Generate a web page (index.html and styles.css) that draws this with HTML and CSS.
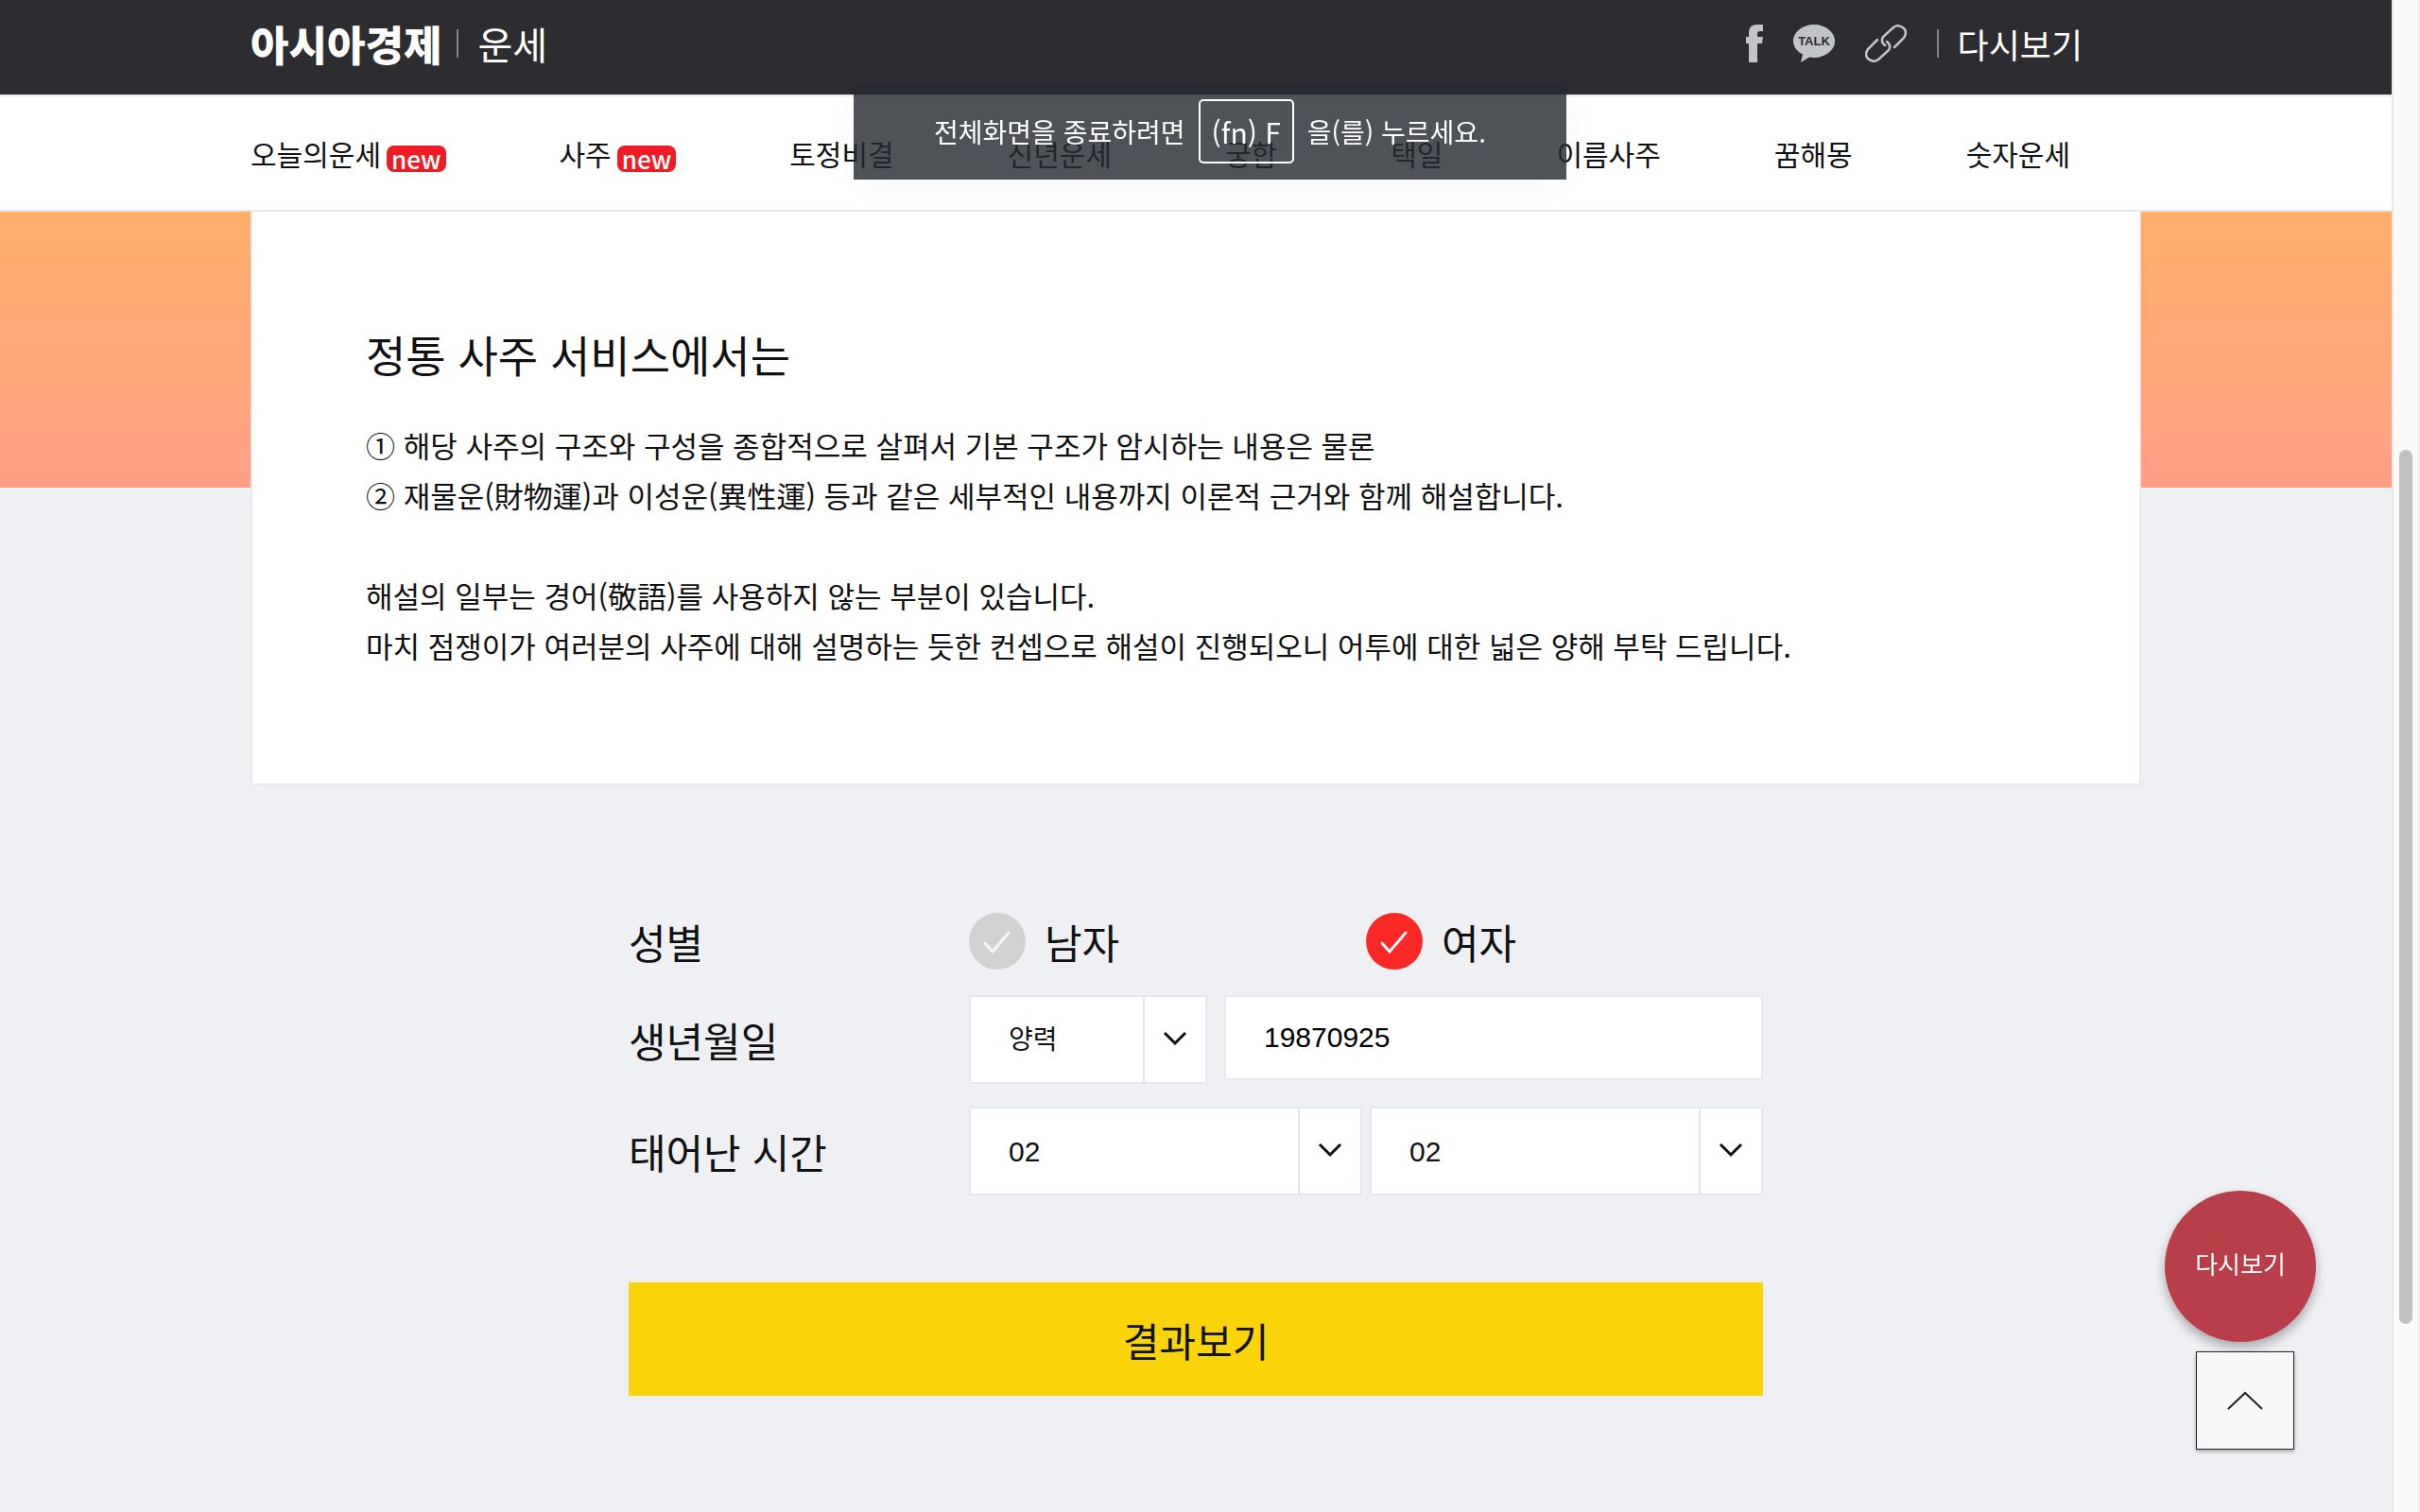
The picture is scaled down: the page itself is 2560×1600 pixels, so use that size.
FILE: index.html
```html
<!DOCTYPE html>
<html lang="ko">
<head>
  <meta charset="UTF-8">
  <title>아시아경제 운세</title>
  <meta name="viewport" content="width=device-width, initial-scale=1.0">
  <link rel="stylesheet" href="styles.css">
</head>
<body>

  <div class="page">
    <header class="top">
      <div class="inner top-inner">
        <a href="#" class="logo">아시아경제</a>
        <span class="bar"></span>
        <a href="#" class="section-name">운세</a>

        <div class="share">
          <a href="#" aria-label="facebook">
            <svg width="18" height="40" viewBox="0 0 18 40" fill="#c1c4c9"><path d="M3 40V20H0v-7h3V9c0-6 3-9 9-9h6v7h-3c-2 0-3 1-3 3v3h6l-1 7h-5v20z"/></svg>
          </a>
          <a href="#" aria-label="kakaotalk">
            <svg width="44" height="40" viewBox="0 0 44 40">
              <path d="M22 0C10 0 0 8 0 17.500c0 6 4 11 10 14L8 40l9-5.500 5 .5c12 0 22-8 22-17.500S34 0 22 0z" fill="#c1c4c9"/>
              <text x="22" y="22" text-anchor="middle" class="talk">TALK</text>
            </svg>
          </a>
          <a href="#" aria-label="link">
            <svg width="44" height="40" viewBox="0 0 44 40" fill="none" stroke="#c1c4c9" stroke-width="2.500" stroke-linecap="round">
              <path d="M31 24L41 14Q45 8 41 4Q35-1 30 3L19 13Q16 18 21 22"/>
              <path d="M13 16L3 26Q-1 32 3 36Q9 41 14 37L25 27Q28 22 23 18"/>
            </svg>
          </a>
        </div>
        <span class="bar"></span>
        <a href="#" class="again">다시보기</a>
      </div>
    </header>

    <nav class="menu">
      <div class="inner menu-inner">
        <a href="#">오늘의운세 <span class="new">new</span></a>
        <a href="#">사주 <span class="new">new</span></a>
        <a href="#">토정비결</a>
        <a href="#">신년운세</a>
        <a href="#">궁합</a>
        <a href="#">택일</a>
        <a href="#">이름사주</a>
        <a href="#">꿈해몽</a>
        <a href="#">숫자운세</a>
      </div>
    </nav>

    <main class="content">
      <section class="inner card">
        <h2>정통 사주 서비스에서는</h2>
        <p>① 해당 사주의 구조와 구성을 종합적으로 살펴서 기본 구조가 암시하는 내용은 물론<br>
        ② 재물운(財物運)과 이성운(異性運) 등과 같은 세부적인 내용까지 이론적 근거와 함께 해설합니다.<br>
        <br>
        해설의 일부는 경어(敬語)를 사용하지 않는 부분이 있습니다.<br>
        마치 점쟁이가 여러분의 사주에 대해 설명하는 듯한 컨셉으로 해설이 진행되오니 어투에 대한 넓은 양해 부탁 드립니다.</p>
      </section>

      <form id="sajuForm">
        <div class="row gender" role="radiogroup" aria-labelledby="genderTitle">
          <span class="title" id="genderTitle">성별</span>
          <div class="fields">
            <div class="option">
              <input type="radio" name="gender" id="male" value="m">
              <label for="male">남자</label>
            </div>
            <div class="option">
              <input type="radio" name="gender" id="female" value="f" checked>
              <label for="female">여자</label>
            </div>
          </div>
        </div>

        <div class="row">
          <label class="title" for="birth">생년월일</label>
          <div class="fields birth">
            <select id="calendar" class="calendar" aria-label="양력/음력">
              <option>양력</option>
              <option>음력</option>
            </select>
            <input type="text" id="birth" value="19870925">
          </div>
        </div>

        <div class="row">
          <label class="title" for="hour">태어난 시간</label>
          <div class="fields time">
            <select id="hour">
              <option>02</option>
            </select>
            <select id="minute" aria-label="분">
              <option>02</option>
            </select>
          </div>
        </div>

        <button type="submit" class="submit">결과보기</button>
      </form>
    </main>
  </div>

  <div class="scrollbar"><div class="thumb"></div></div>

  <div class="quick">
    <a href="#" class="quick-again">다시보기</a>
    <button type="button" class="go-top" aria-label="맨 위로">
      <svg width="38" height="20" viewBox="0 0 38 20" fill="none" stroke="#222" stroke-width="2"><path d="M1 19L19 2l18 17"/></svg>
    </button>
  </div>

  <div class="toast">
    <span>전체화면을 종료하려면</span>
    <kbd>(fn) F</kbd>
    <span>을(를) 누르세요.</span>
  </div>

  <script>
    document.querySelector(".go-top").addEventListener("click", function() {
      window.scrollTo(0, 0);
    });

    document.getElementById("sajuForm").addEventListener("submit", function(e) {
      e.preventDefault();
    });
  </script>
</body>
</html>
```

FILE: styles.css
```css
* { box-sizing: border-box; margin: 0; padding: 0; font-family: "Noto Sans CJK KR", sans-serif; }

body {
  display: flex;
  min-height: 100vh;
  background: #eff0f4;
  color: #111;
}

a { color: inherit; text-decoration: none; }
svg { display: block; }

.page { flex: 1; min-width: 0; }

.inner {
  width: 100%;
  max-width: 2000px;
  margin: 0 auto;
}

/* header */
.top { background: #2d2c31; color: white; }

.top-inner {
  display: flex;
  align-items: center;
  height: 100px;
  padding-right: 62px;
  padding-bottom: 8px;
}

.logo { font-size: 44px; font-weight: 900; line-height: 60px; }
.section-name { font-size: 40px; line-height: 60px; }
.again { font-size: 36px; line-height: 60px; }

.bar {
  width: 2px;
  height: 30px;
  margin: 0 20px 0 16px;
  background: #86868a;
}

.share {
  display: flex;
  gap: 32px;
  margin-left: auto;
  margin-right: 16px;
}

.talk {
  fill: #2d2c31;
  font-family: "Liberation Sans", sans-serif;
  font-size: 13px;
  font-weight: bold;
}

/* menu */
.menu {
  background: white;
  border-top: 2px solid #ebebeb;
  border-bottom: 2px solid #e8e8e8;
}

.menu-inner {
  display: flex;
  align-items: center;
  gap: 120px;
  height: 120px;
}

.menu a {
  display: flex;
  align-items: flex-end;
  gap: 6px;
  font-size: 30px;
  line-height: 40px;
  white-space: nowrap;
}

.new {
  padding: 0 5px;
  background: #ef1c24;
  border-radius: 8px;
  color: white;
  font-size: 26px;
  font-weight: 500;
  line-height: 28px;
}

/* intro card */
.content {
  padding-bottom: 120px;
  background: linear-gradient(#ffae69, #ff9f87) no-repeat top / 100% 292px;
}

.card {
  padding: 120px;
  background: white;
  border: 2px solid #e9eaea;
  border-top: none;
}

.card h2 {
  margin-bottom: 40px;
  font-size: 46px;
  font-weight: 400;
  line-height: 60px;
}

.card p { font-size: 31px; line-height: 53px; }

/* form */
form {
  display: flex;
  flex-direction: column;
  gap: 24px;
  max-width: 1200px;
  margin: 132px auto 0;
}

.row { display: flex; align-items: center; }
.gender { height: 66px; }

.title { width: 30%; font-size: 43px; line-height: 60px; }
.fields { display: flex; flex: 1; align-items: flex-start; }

.option {
  display: flex;
  flex: 1;
  align-items: center;
  gap: 20px;
}

.option label { font-size: 43px; line-height: 60px; }

.option input {
  appearance: none;
  width: 60px;
  height: 60px;
  border-radius: 50%;
  background: #d2d2d2 url("data:image/svg+xml,%3Csvg xmlns='http://www.w3.org/2000/svg' width='60' height='60' fill='none' stroke='%23f6f6f6' stroke-width='3' stroke-linecap='round'%3E%3Cpath d='M17 32l8 9 17-20'/%3E%3C/svg%3E");
}

.option input:checked { background-color: #fb2828; }

select, .birth input {
  flex: 1;
  min-width: 0;
  height: 94px;
  padding: 0 40px;
  background: white;
  border: 2px solid #e3e8f0;
  border-radius: 0;
  color: #111;
  font-family: "Liberation Sans", "Noto Sans CJK KR", sans-serif;
  font-size: 30px;
}

select {
  appearance: none;
  background: white url("data:image/svg+xml,%3Csvg xmlns='http://www.w3.org/2000/svg' width='66' height='90' fill='none'%3E%3Cpath d='M1 0v90' stroke='%23e5e5e5' stroke-width='2'/%3E%3Cpath d='M23 38l11 11 11-11' stroke='%23111' stroke-width='3'/%3E%3C/svg%3E") no-repeat right center;
}

.birth { gap: 18px; }
.birth input { height: 90px; border-color: #e9e9e9; color: #000; }
.calendar { flex: 0 0 30%; font-size: 28px; }
.time { gap: 8px; }

.submit {
  height: 120px;
  margin-top: 68px;
  background: #fad40a;
  border: none;
  color: #111;
  font-size: 42px;
  cursor: pointer;
}

/* right side */
.scrollbar {
  position: sticky;
  top: 0;
  width: 30px;
  height: 100vh;
  padding: 476px 6px 0;
  background: #fafafa;
  border-left: 2px solid #e8e8e8;
  border-right: 2px solid #eee;
}

.thumb {
  height: 925px;
  border-radius: 8px;
  background: #c1c1c1;
}

.quick {
  position: fixed;
  right: 110px;
  bottom: 66px;
  display: flex;
  flex-direction: column;
  align-items: center;
  gap: 10px;
}

.quick-again {
  display: flex;
  align-items: center;
  justify-content: center;
  width: 160px;
  height: 160px;
  padding-bottom: 8px;
  border-radius: 50%;
  background: #b83f49;
  box-shadow: 0 6px 12px rgba(0, 0, 0, 0.3);
  color: white;
  font-size: 26px;
}

.go-top {
  display: flex;
  align-items: center;
  justify-content: center;
  width: 104px;
  height: 104px;
  margin-left: 10px;
  background: #f7f8fa;
  border: 1px solid #222;
  box-shadow: 0 2px 4px rgba(0, 0, 0, 0.3);
  cursor: pointer;
}

/* fullscreen notice */
.toast {
  position: fixed;
  top: 89px;
  left: 50%;
  transform: translateX(-50%);
  display: flex;
  align-items: center;
  justify-content: center;
  gap: 14px;
  width: 754px;
  height: 101px;
  padding-bottom: 2px;
  background: rgba(38, 43, 49, 0.81);
  box-shadow: 0 4px 40px rgba(0, 0, 0, 0.03);
  color: white;
  font-size: 28px;
  white-space: nowrap;
}

.toast kbd {
  padding: 0 12px;
  border: 2px solid white;
  border-radius: 5px;
  font-size: 30px;
  line-height: 64px;
}
```
